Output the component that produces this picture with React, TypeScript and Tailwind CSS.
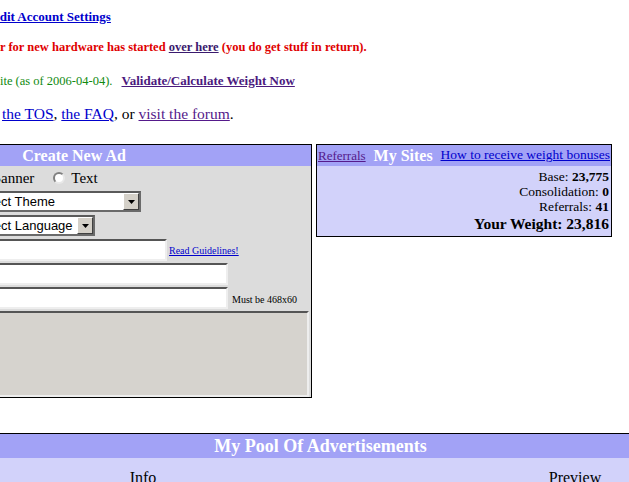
import React from 'react'

const serif = "font-['Liberation_Serif','Times_New_Roman',serif]"

function Select({ label, width }: { label: string; width: string }) {
  return (
    <div className={`flex h-[21px] ${width} border-2 border-t-[#5a5a5a] border-l-[#5a5a5a] border-r-[#6a6a6a] border-b-[#6a6a6a] bg-white`}>
      <div className="flex-1 pl-[2px] text-[13px] leading-[17px] text-black font-['Liberation_Sans',Arial,sans-serif] whitespace-nowrap overflow-hidden">
        {label}
      </div>
      <div className="w-[16px] h-[17px] bg-[#d4d0c8] border border-t-white border-l-white border-r-[#404040] border-b-[#404040] flex items-center justify-center">
        <svg width="7" height="4" viewBox="0 0 7 4">
          <path d="M0 0h7L3.5 4z" fill="#000" />
        </svg>
      </div>
    </div>
  )
}

function TextBox({ width }: { width: string }) {
  return (
    <div className={`h-[22px] ${width} bg-white border-2 border-t-[#555] border-l-[#555] border-r-[#eeeeee] border-b-[#eeeeee]`} />
  )
}

export default function App() {
  return (
    <div className={`relative w-full h-[482px] overflow-hidden bg-white ${serif}`}>
      {/* top messages */}
      <div className="mt-[9px] h-[15px] leading-[15px] text-[13px] font-bold whitespace-nowrap">
        <a href="#" className="-ml-[9px] text-[#0000cc] underline">Edit Account Settings</a>
      </div>
      <div className="mt-[16px] h-[15px] leading-[15px] text-[12.5px] font-bold text-[#e00000] whitespace-nowrap">
        r for new hardware has started{' '}
        <a href="#" className="text-[#3a1a6e] underline">over here</a> (you do get stuff in return).
      </div>
      <div className="mt-[18px] h-[15px] leading-[15px] text-[12.5px] text-[#108a10] whitespace-nowrap">
        ite (as of 2006-04-04).
        <a href="#" className="ml-[9px] text-[13px] font-bold text-[#4b1a7e] underline">Validate/Calculate Weight Now</a>
      </div>
      <div className="mt-[17px] h-[18px] leading-[18px] text-[15.5px] text-black whitespace-nowrap">
        <a href="#" className="ml-[2px] text-[#0000cc] underline">the TOS</a>,{' '}
        <a href="#" className="text-[#0000cc] underline">the FAQ</a>, or{' '}
        <a href="#" className="text-[#551a8b] underline">visit the forum</a>.
      </div>

      {/* panels */}
      <div className="mt-[21px] flex items-start">
        {/* Create New Ad */}
        <div className="-ml-[164px] w-[476px] h-[254px] shrink-0 border border-black bg-[#dcdcdc] flex flex-col">
          <div className="h-[21px] bg-[#a2a2f6] text-white text-[16px] font-bold leading-[21px] text-center">
            Create New Ad
          </div>
          <div className="pl-[134px] flex flex-col">
            <div className="h-[24px] flex items-center text-[15px] text-black">
              <span className="ml-[2px] w-[12px] h-[12px] rounded-full bg-white border-2 border-t-[#808080] border-l-[#808080] border-r-[#e8e8e8] border-b-[#e8e8e8]" />
              <span className="ml-[6px]">Banner</span>
              <span className="ml-[19px] w-[12px] h-[12px] rounded-full bg-white border-2 border-t-[#808080] border-l-[#808080] border-r-[#e8e8e8] border-b-[#e8e8e8]" />
              <span className="ml-[6px]">Text</span>
            </div>
            <div className="mt-[1px]">
              <Select label="Select Theme" width="w-[170px]" />
            </div>
            <div className="mt-[3px]">
              <Select label="Select Language" width="w-[124px]" />
            </div>
            <div className="mt-[3px] flex items-center">
              <TextBox width="w-[196px]" />
              <a href="#" className="ml-[2px] text-[10px] text-[#0000cc] underline whitespace-nowrap">Read Guidelines!</a>
            </div>
            <div className="mt-[2px]">
              <TextBox width="w-[257px]" />
            </div>
            <div className="mt-[2px] flex items-center">
              <TextBox width="w-[257px]" />
              <span className="ml-[4px] mt-[2px] text-[10px] text-black whitespace-nowrap">Must be 468x60</span>
            </div>
          </div>
          <div className="mt-[2px] ml-[2px] mr-[2px] h-[86px] bg-[#d6d3ce] border-2 border-t-[#555] border-l-[#555] border-r-[#eeeeee] border-b-[#eeeeee]" />
        </div>

        {/* My Sites */}
        <div className="ml-[4px] w-[296px] shrink-0 border border-black bg-[#d2d2fa]">
          <div className="h-[21px] bg-[#a2a2f6] flex items-center justify-between pl-[1px] pr-[1px] whitespace-nowrap">
            <a href="#" className="text-[13px] text-[#551a8b] underline">Referrals</a>
            <span className="text-[16px] font-bold text-white">My Sites</span>
            <a href="#" className="text-[13.5px] text-[#0000cc] underline">How to receive weight bonuses</a>
          </div>
          <div className="pt-[3px] pb-[3px] pr-[2px] text-right text-[13.5px] leading-[15px] text-black">
            <div>Base: <b>23,775</b></div>
            <div>Consolidation: <b>0</b></div>
            <div>Referrals: <b>41</b></div>
            <div className="text-[15.5px] leading-[19px] font-bold">Your Weight: 23,816</div>
          </div>
        </div>
      </div>

      {/* My Pool Of Advertisements */}
      <div className="mt-[35px] -ml-[164px] w-[969px] border-t border-black">
        <div className="h-[24px] bg-[#a2a2f6] text-white text-[18px] font-bold leading-[24px] text-center">
          My Pool Of Advertisements
        </div>
        <div className="flex bg-[#d2d2fa] h-[40px] pt-[10px] text-[16px] leading-[20px] text-black">
          <div className="w-[614px] text-center">Info</div>
          <div className="w-[250px] text-center">Preview</div>
          <div className="flex-1" />
        </div>
      </div>
    </div>
  )
}
